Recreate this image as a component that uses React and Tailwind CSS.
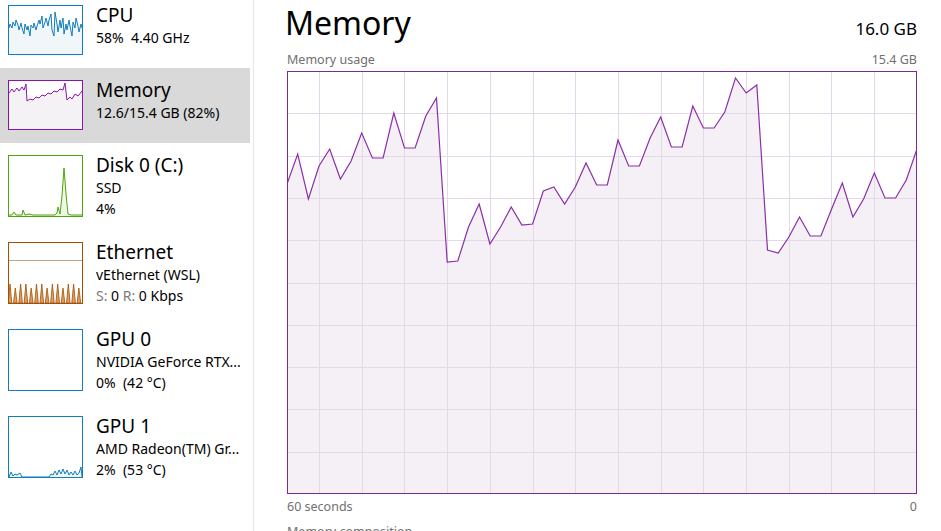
import React from 'react';

const FONT = '"Noto Sans", "Open Sans", sans-serif';

// memory usage samples, one per second (y in px from top of the 423px plot)
const MEM_SAMPLES = [
  113, 83, 128, 95, 78, 108, 90, 62, 87, 87, 42, 77, 77, 45, 27, 191, 190, 156, 133, 173,
  156, 136, 154, 153, 120, 116, 133, 116, 92, 114, 114, 69, 95, 95, 67, 46, 76, 76, 35, 57,
  57, 41, 7, 22, 14, 179, 182, 166, 146, 165, 165, 138, 112, 146, 128, 102, 127, 127, 109, 78,
];

const CPU_SAMPLES = [
  22, 18, 22, 16, 20, 14, 19, 24, 17, 22, 28, 18, 24, 20, 30, 19, 22, 17, 24, 20, 14, 18, 10, 22,
  16, 12, 20, 14, 8, 24, 30, 6, 18, 26, 14, 22, 12, 28, 18, 24, 14, 20, 30, 16, 22, 12, 20, 26, 18, 22,
];

const MEM_THUMB = [
  [0, 12], [3, 8], [5, 11], [8, 7], [10, 10], [13, 6], [15, 9], [17, 3], [18, 20], [21, 18], [24, 19],
  [27, 16], [30, 17], [33, 14], [36, 15], [39, 12], [42, 13], [45, 10], [48, 11], [51, 8], [54, 9],
  [56, 2], [58, 19], [61, 16], [63, 18], [66, 13], [69, 15], [73, 10],
];

const DISK_THUMB = [
  [0, 59], [3, 59], [5, 56], [7, 59], [13, 59], [14, 54], [16, 59], [20, 58], [24, 59], [46, 59],
  [48, 57], [49, 51], [51, 58], [53, 40], [55, 12], [57, 38], [59, 58], [62, 59], [73, 59],
];

const GPU1_THUMB = [
  [0, 60], [2, 55], [4, 59], [6, 57], [8, 58], [11, 56], [13, 60], [40, 60], [42, 57], [44, 58],
  [46, 54], [48, 58], [50, 53], [52, 57], [54, 52], [56, 57], [58, 53], [60, 58], [62, 55], [64, 58],
  [66, 54], [68, 58], [70, 56], [72, 50], [73, 60],
];

function pts(list) {
  return list.map(([x, y]) => `${x},${y}`).join(' ');
}

function Thumb({ h, color, children }) {
  return (
    <div className="shrink-0 w-[75px] border bg-white" style={{ height: h, borderColor: color }}>
      <svg width="73" height={h - 2} viewBox={`0 0 73 ${h - 2}`} className="block">
        {children}
      </svg>
    </div>
  );
}

function Sparkline({ list, h, color, fill }) {
  const line = pts(list);
  return (
    <>
      <polygon points={`0,${h} ${line} 73,${h}`} fill={fill} />
      <polyline points={line} fill="none" stroke={color} strokeWidth="1" />
    </>
  );
}

function SideItem({ selected, tall, thumb, title, lines }) {
  return (
    <div
      className={`flex gap-[13px] pl-[8px] pr-[6px] pt-[12px] ${tall ? 'h-[87px]' : 'h-[75px]'} ${
        selected ? 'bg-[#d9d9d9]' : ''
      }`}
    >
      {thumb}
      <div className="min-w-0 flex-1 text-black">
        <div className="text-[19px] leading-[24px] -mt-[2px]">{title}</div>
        {lines.map((l, i) => (
          <div key={i} className="text-[14px] leading-[21px] whitespace-pre overflow-hidden">
            {l}
          </div>
        ))}
      </div>
    </div>
  );
}

function MemoryChart() {
  const step = 630 / 59;
  const line = MEM_SAMPLES.map((y, i) => `${(i * step).toFixed(1)},${y}`).join(' ');
  const hLines = Array.from({ length: 9 }, (_, k) => 42.3 * (k + 1));
  const vLines = Array.from({ length: 14 }, (_, k) => 32 + 42.7 * k);
  return (
    <svg width="630" height="423" viewBox="0 0 630 423" className="block">
      <rect x="0" y="0" width="630" height="423" fill="#ffffff" />
      <polygon points={`0,423 ${line} 630,423`} fill="#f4f0f5" />
      {hLines.map((y) => (
        <line key={`h${y}`} x1="0" x2="630" y1={Math.round(y) + 0.5} y2={Math.round(y) + 0.5} stroke="#e4d9e8" strokeWidth="1" />
      ))}
      {vLines.map((x) => (
        <line key={`v${x}`} x1={Math.round(x) + 0.5} x2={Math.round(x) + 0.5} y1="0" y2="423" stroke="#e4d9e8" strokeWidth="1" />
      ))}
      <polyline points={line} fill="none" stroke="#8b2fa8" strokeWidth="1.2" />
      <rect x="0.5" y="0.5" width="629" height="422" fill="none" stroke="#7c2b95" strokeWidth="1" />
    </svg>
  );
}

export default function App() {
  const cpu = CPU_SAMPLES.map((y, i) => [Math.round(i * (73 / 49)), y]);
  const spikes = Array.from({ length: 14 }, (_, i) => i * 5.3 + 1);

  return (
    <div className="flex w-[941px] h-[531px] overflow-hidden bg-white" style={{ fontFamily: FONT }}>
      {/* Sidebar */}
      <aside className="w-[254px] shrink-0 border-r border-[#e5e5e5]">
        <div className="w-[250px] -mt-[7px]">
          <SideItem
            title="CPU"
            lines={['58%  4.40 GHz']}
            thumb={
              <Thumb h={50} color="#117dbb">
                <Sparkline list={cpu} h={48} color="#117dbb" fill="#f1f6fa" />
              </Thumb>
            }
          />
          <SideItem
            selected
            title="Memory"
            lines={['12.6/15.4 GB (82%)']}
            thumb={
              <Thumb h={50} color="#8b12ae">
                <Sparkline list={MEM_THUMB} h={48} color="#8b12ae" fill="#f4f2f4" />
              </Thumb>
            }
          />
          <SideItem
            tall
            title="Disk 0 (C:)"
            lines={['SSD', '4%']}
            thumb={
              <Thumb h={62} color="#4da60c">
                <Sparkline list={DISK_THUMB} h={60} color="#4da60c" fill="#eff7e9" />
              </Thumb>
            }
          />
          <SideItem
            tall
            title="Ethernet"
            lines={[
              'vEthernet (WSL)',
              <>
                <span className="text-[#7a7a7a]">S:</span> 0 <span className="text-[#7a7a7a]">R:</span> 0 Kbps
              </>,
            ]}
            thumb={
              <Thumb h={62} color="#a74f01">
                <line x1="0" x2="73" y1="17.5" y2="17.5" stroke="#c9a283" strokeWidth="1" />
                {spikes.map((x, i) => (
                  <polygon
                    key={i}
                    points={`${x - 1.8},60 ${x},${i % 3 === 1 ? 45 : 41} ${x + 1.8},60`}
                    fill="#d9a16a"
                    stroke="#a74f01"
                    strokeWidth="0.8"
                  />
                ))}
              </Thumb>
            }
          />
          <SideItem
            tall
            title="GPU 0"
            lines={['NVIDIA GeForce RTX...', '0%  (42 °C)']}
            thumb={<Thumb h={62} color="#117dbb" />}
          />
          <SideItem
            tall
            title="GPU 1"
            lines={['AMD Radeon(TM) Gr...', '2%  (53 °C)']}
            thumb={
              <Thumb h={62} color="#117dbb">
                <Sparkline list={GPU1_THUMB} h={60} color="#117dbb" fill="#f1f6fa" />
              </Thumb>
            }
          />
        </div>
      </aside>

      {/* Detail panel */}
      <main className="flex-1 pl-[33px] pr-[24px] text-black">
        <div className="flex items-baseline justify-between h-[50px]">
          <h1 className="text-[32px] leading-[46px] font-normal -ml-[2px]">Memory</h1>
          <span className="text-[17px]">16.0 GB</span>
        </div>
        <div className="flex justify-between text-[12.5px] leading-[20px] text-[#707070]">
          <span>Memory usage</span>
          <span>15.4 GB</span>
        </div>
        <div className="mt-[1px]">
          <MemoryChart />
        </div>
        <div className="flex justify-between text-[12.5px] leading-[26px] text-[#707070]">
          <span>60 seconds</span>
          <span>0</span>
        </div>
        <div className="text-[12.5px] leading-[20px] text-[#707070] mt-[2px]">Memory composition</div>
      </main>
    </div>
  );
}
